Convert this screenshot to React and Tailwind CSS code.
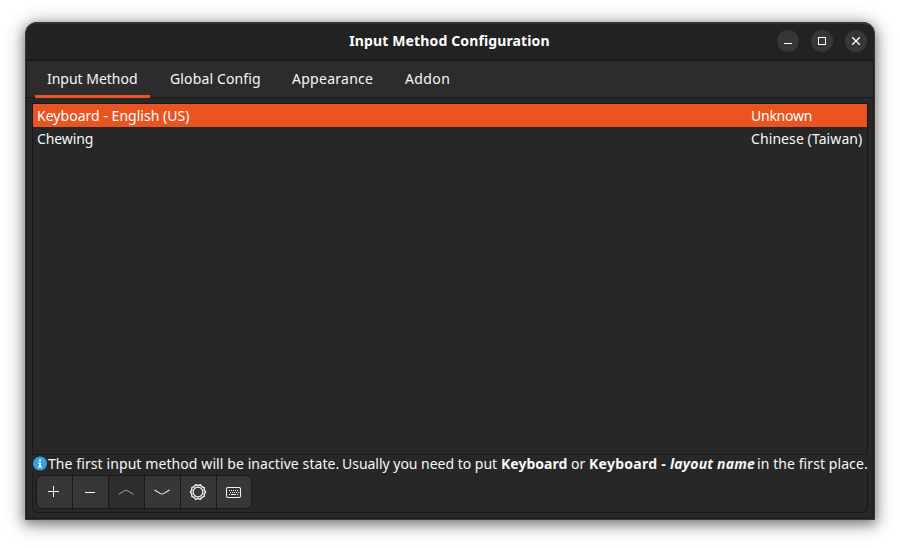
const tabs = [
  { label: "Input Method", cls: "w-[115px] tracking-[-0.02px]", active: true },
  { label: "Global Config", cls: "w-[114px] tracking-[0.13px]" },
  { label: "Appearance", cls: "w-[105px] tracking-[0.27px]" },
  { label: "Addon", cls: "w-[69px] tracking-[0.4px]" },
];

function WindowButton({ children }) {
  return (
    <button className="flex size-[22px] items-center justify-center rounded-full bg-[#373737]">
      <svg width="22" height="22" viewBox="0 0 22 22" fill="none" stroke="#fff">
        {children}
      </svg>
    </button>
  );
}

function ToolButton({ children, disabled }) {
  return (
    <button
      disabled={disabled}
      className={
        disabled
          ? "flex h-8 w-[35px] items-center justify-center bg-[#2c2c2c]"
          : "flex h-8 w-[35px] items-center justify-center bg-[#373737]"
      }
    >
      <svg width="35" height="32" viewBox="0 0 35 32" fill="none" stroke={disabled ? "#858585" : "#f4f4f4"}>
        {children}
      </svg>
    </button>
  );
}

function GearIcon() {
  const points = [];
  for (let i = 0; i < 40; i++) {
    const a = (i / 40) * Math.PI * 2;
    const r = 7 + 0.6 * Math.cos(a * 10);
    points.push(`${(17 + r * Math.cos(a)).toFixed(2)},${(16 + r * Math.sin(a)).toFixed(2)}`);
  }
  return (
    <>
      <polygon points={points.join(" ")} strokeWidth="1.4" strokeLinejoin="round" />
      <circle cx="17" cy="16" r="4.8" strokeWidth="1.2" />
    </>
  );
}

export default function App() {
  return (
    <div className="h-[548px] w-[900px] overflow-hidden bg-white px-[25px] pt-[22px] font-['Noto_Sans',sans-serif] text-[14px] leading-[20px] text-[#f7f7f7]">
      <div className="flex h-[498px] w-[850px] flex-col overflow-hidden rounded-t-[12px] border-x border-b border-[#393939] bg-[#272727] shadow-[0_3px_12px_1px_rgba(0,0,0,0.42),0_3px_22px_3px_rgba(0,0,0,0.2)]">
        <header className="flex h-[39px] shrink-0 items-center rounded-t-[11px] border-t-2 border-b-2 border-t-[#343434] border-b-[#191919] bg-[#222222] pr-[7px] pb-px">
          <div className="w-[97px] shrink-0" />
          <h1 className="flex-1 pr-px text-center font-bold tracking-[0.13px] whitespace-nowrap text-white">
            Input Method Configuration
          </h1>
          <div className="flex w-[90px] shrink-0 gap-3">
            <WindowButton>
              <path d="M7 13.5h8" />
            </WindowButton>
            <WindowButton>
              <rect x="7.5" y="7.5" width="7" height="7" />
            </WindowButton>
            <WindowButton>
              <path d="M7.2 7.2l7.6 7.6M14.8 7.2l-7.6 7.6" strokeWidth="1.3" />
            </WindowButton>
          </div>
        </header>

        <div className="flex min-h-0 flex-1 flex-col border-x border-b border-[#191919]">
          <nav className="flex h-[37px] shrink-0 gap-2 border-b border-[#191919] bg-[#2c2c2c] pl-2">
            {tabs.map((t) => (
              <button
                key={t.label}
                className={`-mb-px flex h-[37px] items-center px-3 whitespace-nowrap ${t.cls} ${
                  t.active ? "border-b-3 border-[#e95420] pt-[2px]" : "pb-px"
                }`}
              >
                {t.label}
              </button>
            ))}
          </nav>

          <main className="flex flex-1 flex-col px-[5px] pt-[5px]">
            <div className="h-[352px] shrink-0 border border-[#191919]">
              <div className="flex h-[23px] items-center justify-between bg-[#e95420] pl-1 text-white">
                <span className="tracking-[0.03px]">Keyboard - English (US)</span>
                <span className="w-[116px] tracking-[-0.25px]">Unknown</span>
              </div>
              <div className="flex h-[23px] items-center justify-between pl-1">
                <span className="tracking-[-0.1px]">Chewing</span>
                <span className="w-[116px] tracking-[0.09px] whitespace-nowrap">Chinese (Taiwan)</span>
              </div>
            </div>

            <div className="flex h-[17px] shrink-0 items-center whitespace-nowrap">
              <svg className="shrink-0" width="16" height="17" viewBox="0 0 16 17">
                <circle cx="8" cy="8.5" r="7" fill="#35a0e6" />
                <path d="M7 4.5h2v1.8H7zM6 7.5h3v4h1v1H6v-1h1v-3H6z" fill="#fff" />
              </svg>
              <p className="flex">
                <span className="w-[294px] tracking-[0.09px]">The first input method will be inactive state.</span>
                <span className="w-[159px] tracking-[-0.02px]">Usually you need to put</span>
                <b className="w-[70px] tracking-[0.03px]">Keyboard</b>
                <span className="w-[18px]">or</span>
                <b className="w-[81px] tracking-[0.27px]">Keyboard -</b>
                <b className="w-[87px] tracking-[0.18px] italic">layout name</b>
                <span className="tracking-[0.08px]">in the first place.</span>
              </p>
            </div>

            <div className="flex h-[41px] shrink-0 rounded-b-[6px] border-x border-b border-[#191919] pt-[3px] pl-[3px]">
              <div className="flex h-[34px] w-[216px] gap-px overflow-hidden rounded-[6px] border border-[#191919] bg-[#191919]">
                <ToolButton>
                  <path d="M11 15.5h11M16.5 10v11" />
                </ToolButton>
                <ToolButton>
                  <path d="M12 16.5h10" />
                </ToolButton>
                <ToolButton disabled>
                  <path d="M9.5 18.3L15.5 14.7Q17 13.9 18.5 14.7L24.5 18.3" strokeWidth="1.2" />
                </ToolButton>
                <ToolButton>
                  <path d="M9.5 14L15.5 17.6Q17 18.4 18.5 17.6L24.5 14" strokeWidth="1.05" />
                </ToolButton>
                <ToolButton>
                  <GearIcon />
                </ToolButton>
                <ToolButton>
                  <rect x="9.5" y="11.5" width="14" height="10" rx="1.5" strokeWidth="1.1" />
                  <path d="M12 14.5h10M13 16.5h9" strokeDasharray="1 1" />
                  <path d="M12 18.5h1M14 18.5h5M20 18.5h1" />
                </ToolButton>
              </div>
            </div>
          </main>
        </div>
      </div>
    </div>
  );
}
